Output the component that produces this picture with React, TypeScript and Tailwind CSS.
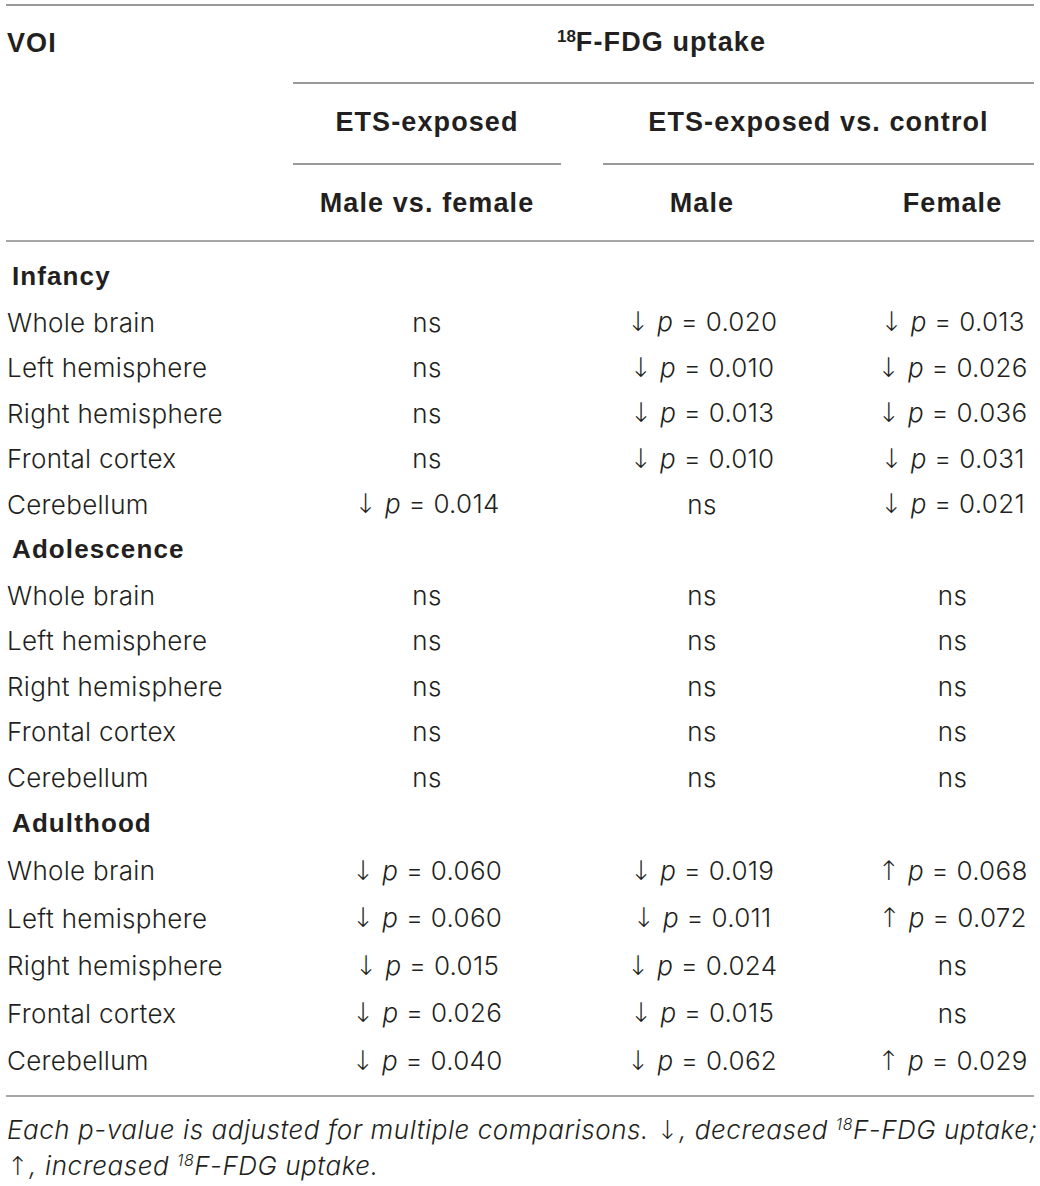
import React from "react";

type Cell = { d?: "↓" | "↑"; v?: string } | "ns";
type Row = { label: string; c: [Cell, Cell, Cell]; h: string };

const sections: { title: string; h: string; rows: Row[] }[] = [
  {
    title: "Infancy",
    h: "h-[45.5px]",
    rows: [
      { label: "Whole brain", c: ["ns", { d: "↓", v: "0.020" }, { d: "↓", v: "0.013" }], h: "h-[45.5px]" },
      { label: "Left hemisphere", c: ["ns", { d: "↓", v: "0.010" }, { d: "↓", v: "0.026" }], h: "h-[45.5px]" },
      { label: "Right hemisphere", c: ["ns", { d: "↓", v: "0.013" }, { d: "↓", v: "0.036" }], h: "h-[45.5px]" },
      { label: "Frontal cortex", c: ["ns", { d: "↓", v: "0.010" }, { d: "↓", v: "0.031" }], h: "h-[45.5px]" },
      { label: "Cerebellum", c: [{ d: "↓", v: "0.014" }, "ns", { d: "↓", v: "0.021" }], h: "h-[45.5px]" },
    ],
  },
  {
    title: "Adolescence",
    h: "h-[45.5px]",
    rows: [
      { label: "Whole brain", c: ["ns", "ns", "ns"], h: "h-[45.5px]" },
      { label: "Left hemisphere", c: ["ns", "ns", "ns"], h: "h-[45.5px]" },
      { label: "Right hemisphere", c: ["ns", "ns", "ns"], h: "h-[45.5px]" },
      { label: "Frontal cortex", c: ["ns", "ns", "ns"], h: "h-[45.5px]" },
      { label: "Cerebellum", c: ["ns", "ns", "ns"], h: "h-[45.5px]" },
    ],
  },
  {
    title: "Adulthood",
    h: "h-[47px]",
    rows: [
      { label: "Whole brain", c: [{ d: "↓", v: "0.060" }, { d: "↓", v: "0.019" }, { d: "↑", v: "0.068" }], h: "h-[47.5px]" },
      { label: "Left hemisphere", c: [{ d: "↓", v: "0.060" }, { d: "↓", v: "0.011" }, { d: "↑", v: "0.072" }], h: "h-[47.5px]" },
      { label: "Right hemisphere", c: [{ d: "↓", v: "0.015" }, { d: "↓", v: "0.024" }, "ns"], h: "h-[47.5px]" },
      { label: "Frontal cortex", c: [{ d: "↓", v: "0.026" }, { d: "↓", v: "0.015" }, "ns"], h: "h-[47.5px]" },
      { label: "Cerebellum", c: [{ d: "↓", v: "0.040" }, { d: "↓", v: "0.062" }, { d: "↑", v: "0.029" }], h: "h-[47.5px]" },
    ],
  },
];

function Val({ cell }: { cell: Cell }) {
  if (cell === "ns") return <span>ns</span>;
  return (
    <span className="whitespace-nowrap">
      <span className="font-['DejaVu_Sans',sans-serif] font-light text-[27px]">{cell.d}</span>{" "}
      <i>p</i> = {cell.v}
    </span>
  );
}

const bold = "font-['Liberation_Sans',Arial,sans-serif] font-bold tracking-[1.1px]";

export default function App() {
  return (
    <div className="w-[1040px] h-[1186px] bg-white text-[#231f20] font-['Inter',sans-serif] overflow-hidden">
      <div className="pt-[4px] pl-[6px] w-[1034px]">
        <div className="h-[2px] bg-[#999999]" />
        <div className={`grid grid-cols-[287px_268px_42px_198px_233px] text-[27px] ${bold}`}>
          {/* Row 1 */}
          <div className="h-[78px] flex items-center pl-[1px] pb-[3px]">VOI</div>
          <div className="col-span-4 h-[78px] flex items-center justify-center border-b-2 border-[#999999] pb-[3px]">
            <span className="pr-[4px]">
              <span className="relative top-[-9px] text-[17px] leading-none tracking-normal">18</span>F-FDG uptake
            </span>
          </div>
          {/* Row 2 */}
          <div className="h-[81px]" />
          <div className="h-[81px] flex items-center justify-center border-b-2 border-[#999999] pb-[2px]">ETS-exposed</div>
          <div className="h-[81px]" />
          <div className="col-span-2 h-[81px] flex items-center justify-center border-b-2 border-[#999999] pb-[2px]">
            ETS-exposed vs. control
          </div>
          {/* Row 3 */}
          <div className="h-[75px]" />
          <div className="h-[75px] flex items-center justify-center pt-[2px]">Male vs. female</div>
          <div className="h-[75px]" />
          <div className="h-[75px] flex items-center justify-center pt-[2px]">Male</div>
          <div className="h-[75px] flex items-center justify-center pl-[70px] pt-[2px]">Female</div>
        </div>
        <div className="h-[2px] bg-[#a6a6a6]" />
        <div className="pt-[12px] text-[26px] font-light tracking-[0.3px]">
          {sections.map((s) => (
            <div key={s.title}>
              <div className={`${s.h} flex items-center pl-[6px] ${bold}`}>{s.title}</div>
              {s.rows.map((r) => (
                <div key={s.title + r.label} className={`grid grid-cols-[287px_268px_42px_198px_233px] ${r.h} items-center`}>
                  <div className="pl-[1px] whitespace-nowrap">{r.label}</div>
                  <div className="text-center"><Val cell={r.c[0]} /></div>
                  <div />
                  <div className="text-center"><Val cell={r.c[1]} /></div>
                  <div className="text-center pl-[70px]"><Val cell={r.c[2]} /></div>
                </div>
              ))}
            </div>
          ))}
        </div>
        <div className="mt-[10px] h-[2px] bg-[#a6a6a6]" />
        <div className="pt-[15px] pl-[1px] italic font-light text-[26px] leading-[35px] tracking-[0.55px]">
          <div className="whitespace-nowrap">
            Each p-value is adjusted for multiple comparisons.{" "}
            <span className="not-italic font-['DejaVu_Sans',sans-serif]">↓</span>, decreased{" "}
            <span className="relative top-[-9px] text-[16px] leading-none">18</span>F-FDG uptake;
          </div>
          <div className="whitespace-nowrap">
            <span className="not-italic font-['DejaVu_Sans',sans-serif]">↑</span>, increased{" "}
            <span className="relative top-[-9px] text-[16px] leading-none">18</span>F-FDG uptake.
          </div>
        </div>
      </div>
    </div>
  );
}
